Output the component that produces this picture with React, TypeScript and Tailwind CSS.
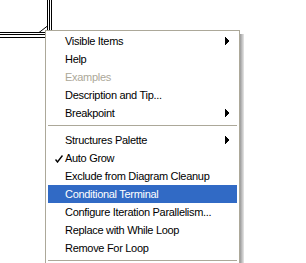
type MenuEntry =
  | { kind: 'item'; label: string; submenu?: boolean; disabled?: boolean; checked?: boolean; active?: boolean }
  | { kind: 'sep' }

const entries: MenuEntry[] = [
  { kind: 'item', label: 'Visible Items', submenu: true },
  { kind: 'item', label: 'Help' },
  { kind: 'item', label: 'Examples', disabled: true },
  { kind: 'item', label: 'Description and Tip...' },
  { kind: 'item', label: 'Breakpoint', submenu: true },
  { kind: 'sep' },
  { kind: 'item', label: 'Structures Palette', submenu: true },
  { kind: 'item', label: 'Auto Grow', checked: true },
  { kind: 'item', label: 'Exclude from Diagram Cleanup' },
  { kind: 'item', label: 'Conditional Terminal', active: true },
  { kind: 'item', label: 'Configure Iteration Parallelism...' },
  { kind: 'item', label: 'Replace with While Loop' },
  { kind: 'item', label: 'Remove For Loop' },
  { kind: 'sep' },
]

function LoopCorner() {
  // bottom-right corner of the For Loop frame, partly hidden by the menu
  return (
    <svg className="absolute left-0 top-0" width="60" height="45" shapeRendering="crispEdges">
      <g stroke="#000" strokeWidth="1" fill="none">
        <line x1="47.5" y1="0" x2="47.5" y2="26" />
        <line x1="49.5" y1="0" x2="49.5" y2="40" />
        <line x1="51.5" y1="0" x2="51.5" y2="40" />
        <line x1="0" y1="32.5" x2="39" y2="32.5" />
        <line x1="0" y1="34.5" x2="50" y2="34.5" />
        <line x1="0" y1="37.5" x2="52" y2="37.5" />
      </g>
      <polygon points="39,32.5 47.5,26 47.5,32.5" fill="#fff" stroke="#000" strokeWidth="1" shapeRendering="auto" />
    </svg>
  )
}

function Arrow() {
  return (
    <svg width="5" height="8" viewBox="0 0 5 8" className="absolute right-[7px] top-[5px]" shapeRendering="crispEdges">
      <polygon points="0,0 4,4 0,8" fill="#000" />
    </svg>
  )
}

function Check() {
  return (
    <svg width="8" height="8" viewBox="0 0 8 8" className="absolute left-[7px] top-[6px]">
      <path d="M0.5 4.5 L2.5 7 L7.5 0.5" stroke="#000" strokeWidth="1.4" fill="none" />
    </svg>
  )
}

export default function App() {
  return (
    <div
      className="relative w-[306px] h-[263px] bg-white overflow-hidden text-[11px] tracking-[-0.3px] text-black"
      style={{ fontFamily: '"Liberation Sans", Arial, sans-serif' }}
    >
      <LoopCorner />
      {/* drop shadow */}
      <div className="absolute left-[240px] top-[34px] w-[4px] h-[240px] bg-gradient-to-r from-[#9a9a9a] to-[#e8e8e8]" />
      <div className="absolute left-[45px] top-[30px] w-[195px] border border-[#aca899] bg-white pt-[1px] px-[2px]">
        {entries.map((e, i) =>
          e.kind === 'sep' ? (
            <div key={i} className="h-[9px] pt-[3px]">
              <div className="h-px bg-[#aca899]" />
            </div>
          ) : (
            <div
              key={i}
              className={`relative h-[18px] leading-[18px] pl-[17px] whitespace-nowrap ${
                e.active ? 'bg-[#316ac5] text-white' : e.disabled ? 'text-[#aca899]' : 'text-black'
              }`}
            >
              {e.checked && <Check />}
              {e.label}
              {e.submenu && <Arrow />}
            </div>
          )
        )}
      </div>
    </div>
  )
}
